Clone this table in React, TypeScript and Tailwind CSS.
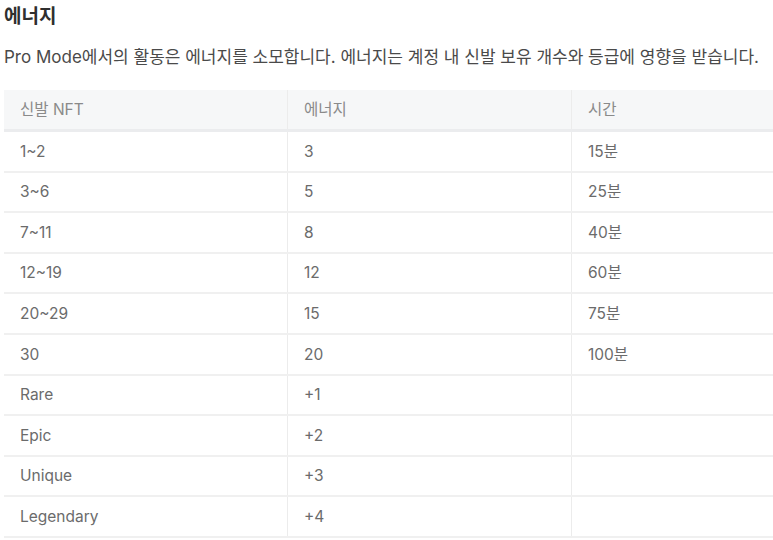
const rows: [string, string, string][] = [
  ['1~2', '3', '15분'],
  ['3~6', '5', '25분'],
  ['7~11', '8', '40분'],
  ['12~19', '12', '60분'],
  ['20~29', '15', '75분'],
  ['30', '20', '100분'],
  ['Rare', '+1', ''],
  ['Epic', '+2', ''],
  ['Unique', '+3', ''],
  ['Legendary', '+4', ''],
];

export default function App() {
  return (
    <div
      className="w-[773px] h-[540px] overflow-hidden bg-white pl-1"
      style={{ fontFamily: 'Inter, "Noto Sans CJK KR", sans-serif' }}
    >
      <h1 className="pt-[4px] text-[19px] leading-[26px] font-bold text-[#2f2f2f]">에너지</h1>
      <p className="mt-[15px] text-[17px] leading-[24px] text-[#4a4a4a] whitespace-nowrap">
        Pro Mode에서의 활동은 에너지를 소모합니다. 에너지는 계정 내 신발 보유 개수와 등급에 영향을 받습니다.
      </p>
      <div className="mt-[21px] w-[852px] text-[15.5px] text-[#6b6b6b]">
        <div className="grid grid-cols-3 h-[42px] bg-[#f6f7f8] border-b-[3px] border-[#ebecee] text-[#8a8a8a]">
          <div className="flex items-center pl-4 border-r border-[#ececec]">신발 NFT</div>
          <div className="flex items-center pl-4 border-r border-[#ececec]">에너지</div>
          <div className="flex items-center pl-4">시간</div>
        </div>
        {rows.map(([a, b, c]) => (
          <div key={a} className="grid grid-cols-3 h-[40.6px] border-b-2 border-[#f0f0f0]">
            <div className="flex items-center pl-4 border-r border-[#ececec]">{a}</div>
            <div className="flex items-center pl-4 border-r border-[#ececec]">{b}</div>
            <div className="flex items-center pl-4">{c}</div>
          </div>
        ))}
      </div>
    </div>
  );
}
